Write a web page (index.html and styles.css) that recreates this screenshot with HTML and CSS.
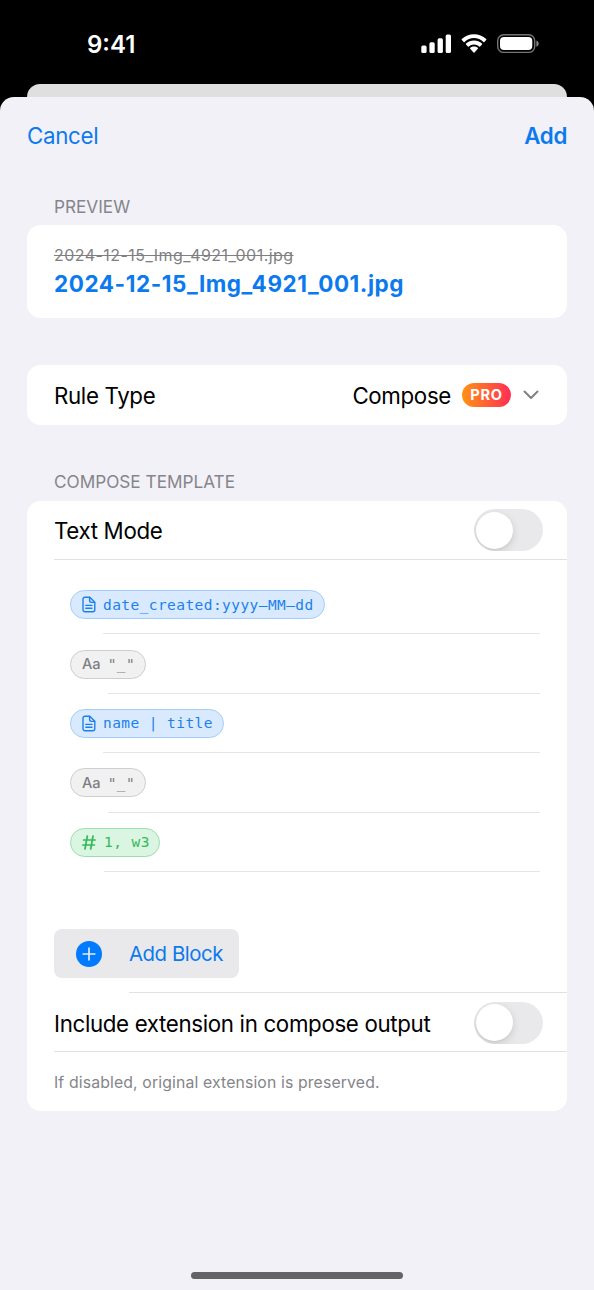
FILE: index.html
```
<!DOCTYPE html>
<html lang="en">
<head>
<meta charset="utf-8">
<title>Add Rule</title>
<link rel="stylesheet" href="styles.css">
</head>
<body>
<div class="phone">
  <header class="status">
    <span class="time">9:41</span>
    <svg class="status-icons" width="120" height="24" viewBox="0 0 120 24" fill="#fff">
      <rect x="1.3" y="13.5" width="5.3" height="7.5" rx="1.6"/>
      <rect x="9.4" y="10.3" width="5.3" height="10.7" rx="1.6"/>
      <rect x="17.6" y="6.3" width="5.3" height="14.7" rx="1.6"/>
      <rect x="25.7" y="2.4" width="5.3" height="18.6" rx="1.6"/>
      <path d="M54 6.1c3.6 0 6.9 1.4 9.4 3.8.3.3.6.3.9 0l1.9-1.9c.3-.3.3-.7 0-1C62.900 3.900 58.600 2.200 54 2.200S45.100 3.900 41.800 7c-.3.300-.3.700 0 1l1.900 1.900c.3.300.6.300.9 0C47.100 7.500 50.400 6.100 54 6.100z"/>
      <path d="M54 12.400c2 0 3.800.7 5.200 2 .3.300.6.300.9 0l1.900-1.900c.3-.3.300-.7 0-1C59.800 9.500 57 8.400 54 8.400s-5.800 1.100-8 3.100c-.3.300-.3.700 0 1l1.900 1.900c.3.300.6.300.9 0 1.400-1.300 3.200-2 5.200-2z"/>
      <path d="M57.800 16.700c.3-.3.300-.7 0-1-1-.8-2.400-1.300-3.800-1.300s-2.800.5-3.800 1.300c-.3.300-.3.700 0 1l3.300 3.700c.3.300.7.300 1 0z"/>
      <rect x="77.700" y="2.700" width="37" height="17.700" rx="6" fill="none" stroke="#747474" stroke-width="1.400"/>
      <rect x="80" y="5" width="32.300" height="13.100" rx="4"/>
      <path d="M116.400 8.400c1.500.5 2.300 1.700 2.300 3.200s-.8 2.700-2.300 3.200z" fill="#858585"/>
    </svg>
  </header>
  <div class="sheet-behind"></div>
  <main class="sheet">
    <nav class="nav"><span class="cancel">Cancel</span><span class="add">Add</span></nav>

    <h2 class="label label-preview">PREVIEW</h2>
    <section class="card preview">
      <span class="old-name">2024-12-15_Img_4921_001.jpg</span>
      <span class="new-name">2024-12-15_Img_4921_001.jpg</span>
    </section>

    <section class="card rule">
      <span class="body rule-title">Rule Type</span>
      <span class="body rule-value">Compose</span>
      <span class="pro">PRO</span>
      <svg class="chevron" width="16" height="10" viewBox="0 0 16 10" fill="none" stroke="#808085" stroke-width="2" stroke-linecap="round" stroke-linejoin="round"><path d="M1.500 1.500 8 8l6.500-6.500"/></svg>
    </section>

    <h2 class="label label-compose">COMPOSE TEMPLATE</h2>
    <section class="card compose">
      <div class="row row-toggle">
        <span class="body text-mode">Text Mode</span>
        <span class="switch"><span class="knob"></span></span>
      </div>
      <ul class="blocks">
        <li class="block">
          <span class="pill blue"><svg class="doc" width="14" height="17" viewBox="0 0 14 17"><path d="M3 1.200h4.800L12.800 6.200v7.600a2 2 0 0 1-2 2H3a2 2 0 0 1-2-2V3.200a2 2 0 0 1 2-2z"/><path d="M7.600 1.400v3.200c0 1.200.6 1.800 1.800 1.800h3.200M3.800 9.400h6.200M3.800 12.200h6.200"/></svg><span class="mono">date_created:yyyy–MM–dd</span></span>
        </li>
        <li class="block inset-text">
          <span class="pill gray"><span class="aa">Aa</span><span class="mono">"_"</span></span>
        </li>
        <li class="block">
          <span class="pill blue"><svg class="doc" width="14" height="17" viewBox="0 0 14 17"><path d="M3 1.200h4.800L12.800 6.200v7.600a2 2 0 0 1-2 2H3a2 2 0 0 1-2-2V3.200a2 2 0 0 1 2-2z"/><path d="M7.600 1.400v3.200c0 1.200.6 1.800 1.800 1.800h3.200M3.800 9.400h6.200M3.800 12.200h6.200"/></svg><span class="mono">name | title</span></span>
        </li>
        <li class="block inset-text">
          <span class="pill gray"><span class="aa">Aa</span><span class="mono">"_"</span></span>
        </li>
        <li class="block inset-number">
          <span class="pill green"><svg class="hash" width="14" height="15" viewBox="0 0 14 15"><path d="M5.300 1 3 14M11 1 8.700 14M1.600 5h11.600M.8 10h11.600"/></svg><span class="mono">1, w3</span></span>
        </li>
      </ul>
      <div class="row row-add">
        <button class="add-block">
          <svg width="26" height="26" viewBox="0 0 26 26"><circle cx="13" cy="13" r="13" fill="#007aff"/><path d="M13 7.200v11.600M7.200 13h11.600" stroke="#e9e9eb" stroke-width="1.700" stroke-linecap="round"/></svg>
          <span class="add-text">Add Block</span>
        </button>
      </div>
      <div class="row row-toggle">
        <span class="body include">Include extension in compose output</span>
        <span class="switch"><span class="knob"></span></span>
      </div>
      <div class="note">If disabled, original extension is preserved.</div>
    </section>
    <div class="home-bar"></div>
  </main>
</div>
</body>
</html>
```

FILE: styles.css
```
* { box-sizing: border-box; }
body { margin: 0; background: #000; font-family: Inter, "Liberation Sans", sans-serif; color: #000; }
.phone { width: 594px; height: 1290px; display: flex; flex-direction: column; overflow: hidden; background: #000; }
.status { height: 84px; flex: none; display: flex; justify-content: space-between; align-items: flex-start; padding: 32px 54px 0 87px; }
.time { color: #fff; font-size: 24px; line-height: 25px; font-weight: 600; letter-spacing: 0; }
.sheet-behind { height: 26px; flex: none; margin: 0 27px -13px; border-radius: 13px 13px 0 0; background: #dfdfdf; }
.sheet { flex: 1; display: flex; flex-direction: column; background: #f2f1f7; border-radius: 14px 14px 0 0; padding: 0 27px; position: relative; }
.nav { height: 77px; display: flex; justify-content: space-between; align-items: center; color: #0c7aee; font-size: 22.3px; letter-spacing: -0.3px; }
.add { font-weight: 600; }
.label { margin: 0; padding-left: 27px; font-size: 17.2px; font-weight: 400; color: #85858b; letter-spacing: 0; }
.label-preview { height: 51px; line-height: 65px; }
.label-compose { height: 76px; line-height: 114px; }
.card { background: #fff; border-radius: 13.5px; }
.preview { height: 93px; padding: 20px 27px 0; display: flex; flex-direction: column; align-items: flex-start; margin-bottom: 47px; }
.old-name { font-size: 16px; line-height: 21px; letter-spacing: 0.46px; color: #7f7f83; text-decoration: line-through; text-decoration-thickness: 1px; }
.new-name { font-size: 22.5px; line-height: 35px; letter-spacing: 0.55px; font-weight: 700; color: #0c7aee; }
.body { font-size: 22.3px; line-height: 28px; letter-spacing: -0.34px; white-space: nowrap; padding-top: 2px; }
.rule { height: 60px; padding: 0 28px 0 27px; display: flex; align-items: center; }
.rule-title { margin-right: auto; }
.pro { width: 49px; height: 24px; margin: 0 12px 0 11px; border-radius: 12px; background: linear-gradient(90deg, #ff9315, #ff2d55); color: #fff; font-size: 14.6px; font-weight: 650; line-height: 24px; text-align: center; letter-spacing: 0.7px; }
.compose { height: 610px; display: flex; flex-direction: column; }
.row { margin-left: 27px; border-bottom: 1px solid #e1e1e4; flex: none; }
.row-toggle { height: 59px; padding-right: 24px; display: flex; align-items: center; justify-content: space-between; }
.switch { width: 69px; height: 42px; padding: 2.500px 2px; border-radius: 21px; background: #e9e9eb; overflow: hidden; }
.knob { display: block; width: 37px; height: 37px; border-radius: 50%; background: #fff; box-shadow: 0 3px 8px rgba(0,0,0,.13), 0 1px 2px rgba(0,0,0,.05); }
.blocks { list-style: none; margin: 0; padding: 15px 27px 0 43px; height: 369px; flex: none; }
.block { height: 59.400px; display: flex; align-items: center; --inset: 33px; background: linear-gradient(#e5e5e7, #e5e5e7) right bottom / calc(100% - var(--inset)) 1px no-repeat; }
.inset-text { --inset: 38px; }
.inset-number { --inset: 34px; }
.pill { height: 29px; display: flex; align-items: center; padding: 0 10px 0 11px; border: 1.350px solid; border-radius: 15px; }
.blue { color: #1b80ed; background: #d9eaff; border-color: #a4cdfb; }
.gray { color: #7e7e82; background: #f1f1f2; border-color: #ceced0; }
.green { color: #34b957; background: #daf5e1; border-color: #9bdfac; }
.doc, .hash { fill: none; stroke: currentColor; stroke-linejoin: round; stroke-linecap: round; }
.doc { stroke-width: 1.400; margin-right: 7px; }
.hash { stroke-width: 1.700; margin-right: 8px; }
.mono { font-family: "DejaVu Sans Mono", "Liberation Mono", monospace; font-size: 14.500px; letter-spacing: 0.430px; white-space: pre; line-height: 20px; }
.green .mono { margin-right: -1px; }
.aa { font-size: 14.600px; font-weight: 500; margin-right: 7px; }
.row-add { height: 64px; border-bottom: 0; background: linear-gradient(#e1e1e4, #e1e1e4) right bottom / calc(100% - 75px) 1px no-repeat; }
.row-add + .row-toggle { padding-top: 1px; }
.add-block { width: 185px; height: 49px; padding: 0 16px 0 22px; display: flex; align-items: center; justify-content: space-between; border: 0; border-radius: 8px; background: #e9e9eb; color: #0c7aee; font-family: inherit; }
.add-text { font-size: 20.400px; line-height: 28px; letter-spacing: -0.450px; }
.note { padding-left: 27px; line-height: 61px; font-size: 15.800px; color: #858589; letter-spacing: 0.130px; }
.home-bar { width: 212px; height: 7px; margin: auto auto 11px; border-radius: 4px; background: #646466; }
```
